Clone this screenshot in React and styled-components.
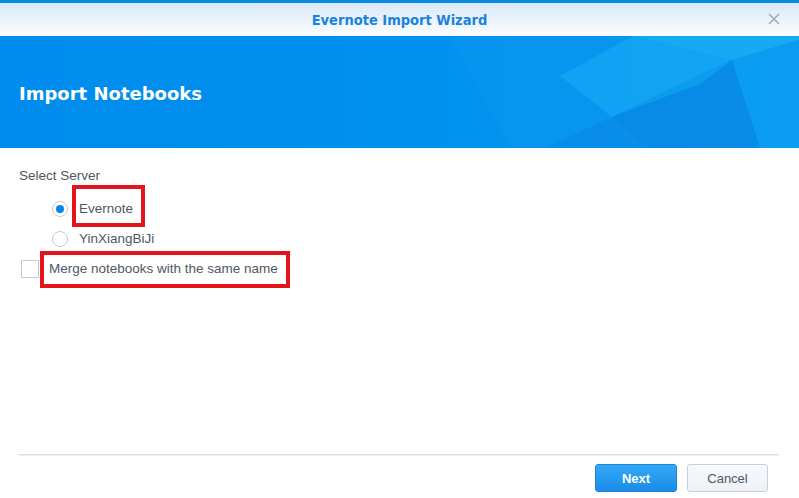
import React, { useState } from "react";
import styled, { createGlobalStyle } from "styled-components";

const GlobalStyle = createGlobalStyle`
  html, body {
    margin: 0;
    padding: 0;
    background: #ffffff;
  }
  * {
    box-sizing: border-box;
  }
`;

export default function App() {
  const [server, setServer] = useState("evernote");
  const [merge, setMerge] = useState(false);

  return (
    <>
      <GlobalStyle />
      <Window>
        <TitleBar>
          <Title>Evernote Import Wizard</Title>
          <CloseButton aria-label="close">
            <svg width="12" height="12" viewBox="0 0 12 12">
              <path d="M1 1 L11 11 M11 1 L1 11" stroke="#a3abb4" strokeWidth="1.6" />
            </svg>
          </CloseButton>
        </TitleBar>
        <Banner>
          <BannerArt viewBox="0 0 799 112" preserveAspectRatio="none">
            <polygon points="450,0 799,0 799,112 510,112" fill="#0a96f0" opacity="0.6" />
            <polygon points="633,0 732,24 612,81 560,40" fill="#1cb0f6" opacity="0.5" />
            <polygon points="633,0 799,0 799,4 732,24" fill="#22b6f7" opacity="0.6" />
            <polygon points="612,81 732,24 760,112 645,112" fill="#0a84df" opacity="0.55" />
            <polygon points="732,24 799,4 799,112 760,112" fill="#0c9ef1" opacity="0.7" />
            <polygon points="545,112 612,81 645,112" fill="#0788e4" opacity="0.5" />
            <polygon points="600,85 612,81 732,24 700,48" fill="#10c0f8" opacity="0.35" />
          </BannerArt>
          <BannerTitle>Import Notebooks</BannerTitle>
        </Banner>
        <Content>
          <SectionLabel>Select Server</SectionLabel>
          <RadioRow onClick={() => setServer("evernote")}>
            <Radio $checked={server === "evernote"} />
            <OptionText $box={server === "evernote" ? "radio" : null}>Evernote</OptionText>
          </RadioRow>
          <RadioRow onClick={() => setServer("yinxiang")}>
            <Radio $checked={server === "yinxiang"} />
            <OptionText>YinXiangBiJi</OptionText>
          </RadioRow>
          <CheckRow onClick={() => setMerge(!merge)}>
            <Checkbox $checked={merge} />
            <OptionText $box="check">Merge notebooks with the same name</OptionText>
          </CheckRow>
        </Content>
        <Footer>
          <Button $primary>Next</Button>
          <Button>Cancel</Button>
        </Footer>
      </Window>
    </>
  );
}

const Window = styled.div`
  width: 799px;
  height: 498px;
  display: flex;
  flex-direction: column;
  background: #ffffff;
  border-top: 3px solid #0a8be8;
  font-family: "Liberation Sans", Arial, sans-serif;
  overflow: hidden;
`;

const TitleBar = styled.div`
  position: relative;
  height: 33px;
  flex: none;
  display: flex;
  align-items: center;
  justify-content: center;
  background: linear-gradient(to bottom, #d9e9f8 0%, #fbfdff 100%);
`;

const Title = styled.div`
  font-family: "DejaVu Sans Condensed", "DejaVu Sans", sans-serif;
  font-weight: bold;
  font-size: 14.5px;
  color: #1a82dc;
`;

const CloseButton = styled.div`
  position: absolute;
  right: 19px;
  top: 10px;
  width: 12px;
  height: 12px;
  display: flex;
  cursor: pointer;
`;

const Banner = styled.div`
  position: relative;
  height: 112px;
  flex: none;
  display: flex;
  align-items: center;
  padding: 2px 19px 0;
  background: linear-gradient(to right, #008cee 0%, #0090ee 50%, #0a9af2 100%);
  overflow: hidden;
`;

const BannerArt = styled.svg`
  position: absolute;
  left: 0;
  top: 0;
  width: 100%;
  height: 100%;
`;

const BannerTitle = styled.h1`
  position: relative;
  margin: 0;
  font-family: "DejaVu Sans", Verdana, sans-serif;
  font-weight: bold;
  font-size: 18px;
  color: #ffffff;
`;

const Content = styled.div`
  flex: 1;
  padding: 20px 19px 0;
  display: flex;
  flex-direction: column;
  color: #4e5863;
  font-size: 13.5px;
`;

const SectionLabel = styled.div`
  line-height: 16px;
  margin-bottom: 10px;
`;

const RadioRow = styled.label`
  display: flex;
  align-items: center;
  gap: 11px;
  margin-left: 33px;
  height: 30px;
  cursor: pointer;
`;

const Radio = styled.span`
  width: 16px;
  height: 16px;
  border-radius: 50%;
  border: 1px solid #c3ccd6;
  background: #ffffff;
  display: flex;
  align-items: center;
  justify-content: center;
  flex: none;
  &::after {
    content: "";
    width: 8px;
    height: 8px;
    border-radius: 50%;
    background: #0a86e6;
    display: ${(p) => (p.$checked ? "block" : "none")};
  }
`;

const CheckRow = styled.label`
  display: flex;
  align-items: center;
  gap: 10px;
  margin-left: 2px;
  height: 30px;
  cursor: pointer;
`;

const Checkbox = styled.span`
  width: 18px;
  height: 18px;
  border: 1px solid #c3ccd6;
  background: #ffffff;
  flex: none;
`;

const boxes = {
  radio: "top: -16px; bottom: -10px; left: -7px; right: -12px;",
  check: "top: -10px; bottom: -11px; left: -9px; right: -12px;",
};

const OptionText = styled.span`
  position: relative;
  line-height: 16px;
  &::after {
    content: "";
    position: absolute;
    ${(p) => (p.$box ? boxes[p.$box] : "display: none;")}
    border: 4px solid #e3141c;
    pointer-events: none;
  }
`;

const Footer = styled.div`
  flex: none;
  margin: 0 20px 0 19px;
  padding: 9px 11px 6px 0;
  border-top: 1px solid #dcdee0;
  box-shadow: inset 0 1px 0 #eeeff0;
  display: flex;
  justify-content: flex-end;
  gap: 10px;
`;

const Button = styled.button`
  width: ${(p) => (p.$primary ? "82px" : "81px")};
  height: 28px;
  border-radius: 3px;
  font-family: "Liberation Sans", Arial, sans-serif;
  font-size: 13px;
  cursor: pointer;
  border: 1px solid ${(p) => (p.$primary ? "#1a83dc" : "#c5d0dc")};
  background: ${(p) =>
    p.$primary
      ? "linear-gradient(to bottom, #33a8f6, #1a8ce8)"
      : "linear-gradient(to bottom, #f7f9fc, #eef2f7)"};
  color: ${(p) => (p.$primary ? "#ffffff" : "#505a64")};
  font-weight: ${(p) => (p.$primary ? "bold" : "normal")};
`;
